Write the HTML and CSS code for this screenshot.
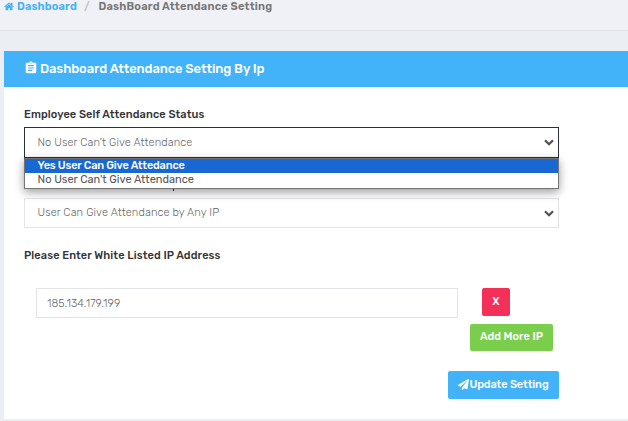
FILE: index.html
```
<!DOCTYPE html>
<html lang="en">
<head>
<meta charset="utf-8">
<title>Dashboard Attendance Setting</title>
<link rel="stylesheet" href="styles.css">
</head>
<body>
<nav class="breadcrumb">
  <a class="crumb-link" href="#">
    <svg class="icon-home" viewBox="0 0 1664 1408" fill="currentColor"><path d="M1408 800v480q0 26-19 45t-45 19H960V960H704v384H320q-26 0-45-19t-19-45V800q0-1 .5-3t.5-3l575-474 575 474q1 2 1 6zm223-69-62 74q-8 9-21 11h-3q-13 0-21-7L832 232 140 809q-12 8-24 7-13-2-21-11l-62-74q-8-10-7-23.500t11-21.500L756 87q32-26 76-26t76 26l244 204V96q0-14 9-23t23-9h192q14 0 23 9t9 23v408l219 182q10 8 11 21.500t-7 23.500z"/></svg><span>Dashboard</span>
  </a>
  <span class="separator">/</span>
  <span class="current">DashBoard Attendance Setting</span>
</nav>
<main class="panel">
  <header class="panel-header">
    <svg class="icon-clipboard" viewBox="0 0 24 24" fill="currentColor"><path d="M19 3h-4.180C14.400 1.840 13.300 1 12 1S9.600 1.840 9.180 3H5c-1.100 0-2 .9-2 2v14c0 1.100.9 2 2 2h14c1.100 0 2-.9 2-2V5c0-1.100-.9-2-2-2zm-7 0c.55 0 1 .45 1 1s-.45 1-1 1-1-.45-1-1 .45-1 1-1zm2 14H7v-2h7v2zm3-4H7v-2h10v2zm0-4H7V7h10v2z"/></svg>
    <h1>Dashboard Attendance Setting By Ip</h1>
  </header>
  <form class="form">
    <span class="label">Employee Self Attendance Status</span>
    <div class="select is-open">
      <span class="status-value">No User Can't Give Attendance</span>
      <svg class="chevron" viewBox="0 0 10 7"><path d="M1 1.200 5 5.200 9 1.200"/></svg>
      <div class="options">
        <div class="option selected">Yes User Can Give Attedance</div>
        <div class="option">No User Can't Give Attendance</div>
      </div>
    </div>
    <div class="covered-label"><i class="descender"></i></div>
    <div class="select">
      <span class="ip-value">User Can Give Attendance by Any IP</span>
      <svg class="chevron" viewBox="0 0 10 7"><path d="M1 1.200 5 5.200 9 1.200"/></svg>
    </div>
    <span class="label label-list">Please Enter White Listed IP Address</span>
    <div class="ip-row">
      <div class="ip-input">185.134.179.199</div>
      <button class="btn remove" type="button">X</button>
    </div>
    <button class="btn add" type="button">Add More IP</button>
    <button class="btn update" type="button"><svg class="icon-plane" viewBox="0 0 512 512" fill="currentColor"><path d="M476 3.200 12.500 270.600c-18.100 10.400-15.800 35.600 2.200 43.200L121 358.400l287.300-253.200c5.500-4.900 13.300 2.600 8.600 8.300L176 407v80.500c0 23.600 28.500 32.900 42.500 15.800L282 426l124.600 52.200c14.200 6 30.400-2.900 33-18.200l72-432C515 7.800 493.300-6.800 476 3.200z"/></svg><span>Update Setting</span></button>
  </form>
</main>
</body>
</html>
```
FILE: styles.css
```
* { box-sizing: border-box; }

body {
  margin: 0;
  height: 421px;
  overflow: hidden;
  background: #ebeff4;
  color: #343a40;
  font: 400 11px/14px Rubik, Roboto, sans-serif;
}

.breadcrumb {
  display: flex;
  height: 31px;
  padding: 0 4px;
  background: #f0f1f6;
  border-bottom: 1px solid #e1e2e6;
  font-weight: 600;
  line-height: 13px;
}

.crumb-link {
  display: flex;
  gap: 3px;
  width: 73px;
  color: #42b2f9;
  letter-spacing: 0.15px;
  text-decoration: none;
}

.icon-home { width: 10px; height: 9px; margin-top: 2px; }
.separator { width: 21.500px; padding-left: 7px; color: #c2c2c5; font-weight: 600; }
.current { color: #777; letter-spacing: 0.21px; }

.panel {
  height: 368px;
  margin: 20px 0 0 4px;
  background: #fff;
}

.panel-header {
  display: flex;
  align-items: center;
  height: 36px;
  padding-left: 20px;
  gap: 2px;
  background: #42b2f9;
  color: #fff;
}

.icon-clipboard { width: 14px; height: 14px; margin-top: -2px; }
h1 { margin: 0; font-size: 13px; font-weight: 500; letter-spacing: -0.1px; }

.form {
  display: flex;
  flex-direction: column;
  width: 555px;
  padding: 21px 0 0 20px;
}

.label { color: #343438; font-weight: 500; letter-spacing: 0.1px; }

.select {
  position: relative;
  display: flex;
  align-items: center;
  justify-content: space-between;
  height: 30px;
  padding: 0 4px 0 12.500px;
  border: 1px solid #e2e4e7;
  background: #fff;
  color: #666;
  font-weight: 300;
}

.is-open { height: 31px; margin-top: 5px; border-color: #263238; }
.status-value, .ip-value { letter-spacing: 0.1px; }
.chevron { width: 10px; height: 7px; fill: none; stroke: #505050; stroke-width: 2.200; }

.options {
  position: absolute;
  z-index: 1;
  top: 30px;
  left: -1px;
  width: 535px;
  height: 31px;
  border: 1px solid #757575;
  background: #fff;
  box-shadow: 0 3px 9px rgba(0, 0, 0, 0.4);
  color: #555;
  font-weight: 400;
}

.option { height: 14px; padding-left: 12.500px; }
.option.selected { background: #1967d2; color: #fff; font-weight: 500; letter-spacing: -0.18px; }

/* The open menu covers this row except for one descender. */
.covered-label { height: 40px; padding: 31px 0 0 149px; }
.descender { display: block; width: 1px; height: 2px; background: #22256b; }

.label-list { margin-top: 21px; }
.ip-row { display: flex; margin: 25px 0 0 12px; gap: 24px; }

.ip-input {
  width: 422px;
  height: 30px;
  padding: 8px 10px 6px;
  border: 1px solid #e2e4e7;
  color: #666;
  font-weight: 300;
  letter-spacing: 0.07px;
}

.btn {
  display: flex;
  align-items: center;
  justify-content: center;
  height: 28px;
  padding: 0 0 1px;
  border: 0;
  border-radius: 2px;
  color: #fff;
  font: 500 11px/14px Rubik, Roboto, sans-serif;
}

.remove { width: 28px; background: #f43059; }
.add { align-self: flex-end; width: 83px; height: 27px; margin: 6px 6px 0 0; background: #7bce4c; }
.update { align-self: flex-end; width: 111px; margin-top: 20px; background: #42b2f9; letter-spacing: -0.1px; }
.icon-plane { width: 11px; height: 11px; }
```
